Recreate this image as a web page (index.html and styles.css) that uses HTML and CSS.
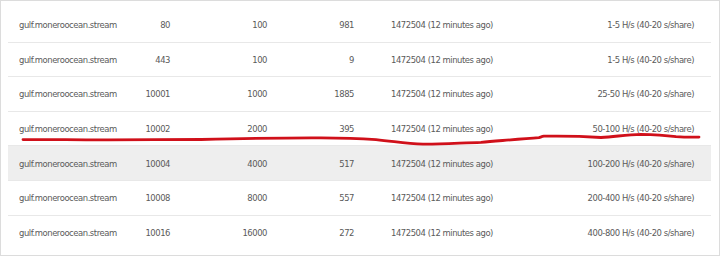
FILE: index.html
```html
<!DOCTYPE html>
<html>
<head>
<meta charset="utf-8">
<link rel="stylesheet" href="styles.css">
</head>
<body>
<div class="frame">
  <table class="ports">
    <colgroup>
      <col class="c-host">
      <col class="c-port">
      <col class="c-diff">
      <col class="c-miners">
      <col class="c-block">
      <col class="c-rate">
    </colgroup>
    <tbody>
      <tr><td class="host">gulf.moneroocean.stream</td><td class="num">80</td><td class="num">100</td><td class="num">981</td><td class="block">1472504 (12 minutes ago)</td><td class="rate">1-5 H/s (40-20 s/share)</td></tr>
      <tr><td class="host">gulf.moneroocean.stream</td><td class="num">443</td><td class="num">100</td><td class="num">9</td><td class="block">1472504 (12 minutes ago)</td><td class="rate">1-5 H/s (40-20 s/share)</td></tr>
      <tr><td class="host">gulf.moneroocean.stream</td><td class="num">10001</td><td class="num">1000</td><td class="num">1885</td><td class="block">1472504 (12 minutes ago)</td><td class="rate">25-50 H/s (40-20 s/share)</td></tr>
      <tr><td class="host">gulf.moneroocean.stream</td><td class="num">10002</td><td class="num">2000</td><td class="num">395</td><td class="block">1472504 (12 minutes ago)</td><td class="rate">50-100 H/s (40-20 s/share)</td></tr>
      <tr class="hover"><td class="host">gulf.moneroocean.stream</td><td class="num">10004</td><td class="num">4000</td><td class="num">517</td><td class="block">1472504 (12 minutes ago)</td><td class="rate">100-200 H/s (40-20 s/share)</td></tr>
      <tr><td class="host">gulf.moneroocean.stream</td><td class="num">10008</td><td class="num">8000</td><td class="num">557</td><td class="block">1472504 (12 minutes ago)</td><td class="rate">200-400 H/s (40-20 s/share)</td></tr>
      <tr><td class="host">gulf.moneroocean.stream</td><td class="num">10016</td><td class="num">16000</td><td class="num">272</td><td class="block">1472504 (12 minutes ago)</td><td class="rate">400-800 H/s (40-20 s/share)</td></tr>
    </tbody>
  </table>
  <svg class="scribble" width="720" height="256" viewBox="0 0 720 256">
    <path d="M22 138.6 C50 138.9 70 138.3 90 138.9 C120 138.4 160 138.7 200 138.5 C240 137.6 290 136.7 320 136.9 C345 137.1 360 137.7 375 138.6 C395 140.6 405 142.8 422 143.2 C440 143.4 460 141.9 480 141.3 C500 139.7 520 137.8 538 136.6 C540 136 541 135.5 543 135.2 C560 134.9 580 135.2 600 136.5 C615 135.6 625 133.7 640 133.3 C655 133.5 665 134.3 675 135.6 C685 136.3 692 136.1 698 136.1" fill="none" stroke="#d0101a" stroke-width="2.8" stroke-linecap="round" stroke-linejoin="round"/>
  </svg>
</div>
</body>
</html>
```
FILE: styles.css
```css
html, body {
  margin: 0;
  padding: 0;
  background: #ffffff;
}

.frame {
  position: relative;
  width: 720px;
  height: 256px;
  box-sizing: border-box;
  border: 1px solid #dcdcdc;
  padding: 7px 8px 0 7px;
  overflow: hidden;
}

.ports {
  width: 703px;
  border-collapse: collapse;
  table-layout: fixed;
  font-family: "DejaVu Sans Condensed", "DejaVu Sans", sans-serif;
  font-size: 9.4px;
  letter-spacing: -0.45px;
  color: #5a5a5a;
}

.c-host { width: 120px; }
.c-port { width: 42px; }
.c-diff { width: 97px; }
.c-miners { width: 87px; }
.c-block { width: 200px; }
.c-rate { width: 157px; }

.ports td {
  height: 33.6px;
  padding: 0;
  border-bottom: 1px solid #e8e8e8;
  white-space: nowrap;
  vertical-align: middle;
}

.ports tr:last-child td {
  border-bottom: none;
}

.ports tr.hover td {
  background: #eeeeee;
}

.host { padding-left: 11px !important; text-align: left; }
.num { text-align: right; }
.block { padding-left: 37px !important; text-align: left; }
.rate { text-align: right; padding-right: 17px !important; }

.scribble {
  position: absolute;
  left: 0;
  top: 0;
  pointer-events: none;
}
```
